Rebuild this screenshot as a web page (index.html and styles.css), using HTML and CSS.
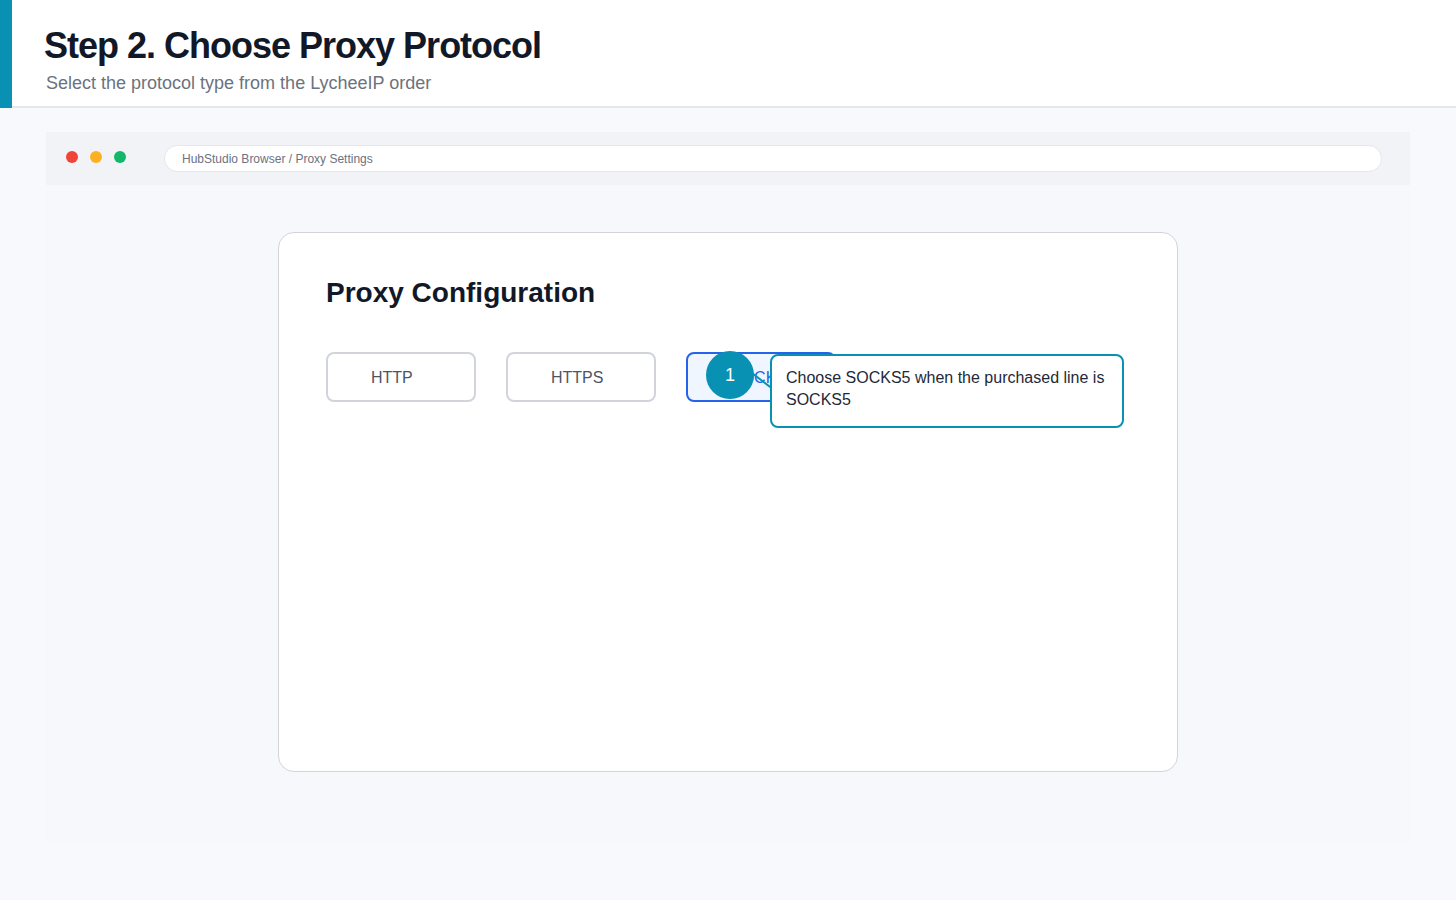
FILE: index.html
```html
<!DOCTYPE html>
<html lang="en">
<head>
    <meta charset="UTF-8">
    <meta name="viewport" content="width=device-width, initial-scale=1.0">
    <title>Step 2. Choose Proxy Protocol</title>
    <link rel="stylesheet" href="styles.css">
</head>
<body>
    <header class="step-header">
        <div class="step-inner">
            <h1>Step 2. Choose Proxy Protocol</h1>
            <p class="step-sub">Select the protocol type from the LycheeIP order</p>
        </div>
    </header>

    <div class="browser">
        <div class="browser-bar">
            <div class="lights">
                <span class="light red"></span>
                <span class="light amber"></span>
                <span class="light green"></span>
            </div>
            <div class="address">HubStudio Browser / Proxy Settings</div>
        </div>

        <div class="browser-body">
            <div class="card">
                <h2>Proxy Configuration</h2>
                <div class="protocols">
                    <button class="proto">HTTP</button>
                    <button class="proto">HTTPS</button>
                    <div class="proto-wrap">
                        <button class="proto active">SOCKS5</button>
                        <svg class="connector" width="40" height="30" viewBox="0 0 40 30">
                            <line x1="2" y1="2" x2="36" y2="28" stroke="#0891b2" stroke-width="2"/>
                        </svg>
                        <span class="badge">1</span>
                        <div class="tip">Choose SOCKS5 when the purchased line is SOCKS5</div>
                    </div>
                </div>
            </div>
        </div>
    </div>
</body>
</html>
```

FILE: styles.css
```css
body {
    font-family: "Liberation Sans", Arial, sans-serif;
    background-color: #f8f9fc;
    margin: 0;
    padding: 0;
}

.step-header {
    background-color: #fff;
    border-left: 12px solid #0891b2;
}

.step-inner {
    border-bottom: 2px solid #e5e7eb;
    padding: 24px 32px 10px;
}

.step-header h1 {
    margin: 0;
    font-size: 36px;
    line-height: 1.2;
    letter-spacing: -1px;
    color: #111827;
}

.step-sub {
    margin: 4px 0 0 2px;
    font-size: 18px;
    line-height: 1.4;
    color: #6b7280;
}

.browser {
    margin: 24px 46px 0;
}

.browser-bar {
    height: 53px;
    background-color: #f1f3f7;
    display: flex;
    align-items: center;
    padding: 0 28px 0 20px;
}

.lights {
    display: flex;
    gap: 12px;
    margin: 0 38px 3px 0;
}

.light {
    width: 12px;
    height: 12px;
    border-radius: 50%;
}

.red { background-color: #f04438; }
.amber { background-color: #fdb022; }
.green { background-color: #12b76a; }

.address {
    flex: 1;
    height: 25px;
    line-height: 26px;
    background-color: #fff;
    border: 1px solid #e5e7eb;
    border-radius: 14px;
    padding: 0 17px;
    font-size: 12px;
    color: #6b7280;
}

.browser-body {
    background-color: #f7f8fb;
    padding: 47px 0 70px;
}

.card {
    width: 900px;
    height: 540px;
    box-sizing: border-box;
    margin: 0 auto;
    background-color: #fff;
    border: 1px solid #d1d5db;
    border-radius: 16px;
    padding: 43px 47px;
}

.card h2 {
    margin: 0;
    font-size: 28px;
    line-height: 1.2;
    color: #111827;
}

.protocols {
    display: flex;
    gap: 30px;
    margin-top: 42px;
}

.proto {
    width: 150px;
    height: 50px;
    background-color: #fff;
    border: 2px solid #d1d5db;
    border-radius: 8px;
    font-family: "Liberation Sans", Arial, sans-serif;
    font-size: 16px;
    color: #4b5563;
    text-align: left;
    padding: 2px 0 0 43px;
}

.proto.active {
    background-color: #eff6ff;
    border-color: #2563eb;
    color: #2563eb;
}

.proto-wrap {
    position: relative;
}

.connector {
    position: absolute;
    left: 60px;
    top: 16px;
}

.badge {
    position: absolute;
    left: 20px;
    top: -1px;
    width: 48px;
    height: 48px;
    border-radius: 50%;
    background-color: #0891b2;
    color: #fff;
    font-size: 18px;
    line-height: 48px;
    text-align: center;
}

.tip {
    position: absolute;
    left: 84px;
    top: 2px;
    width: 322px;
    background-color: #fff;
    border: 2px solid #0891b2;
    border-radius: 8px;
    padding: 11px 14px 15px;
    font-size: 16px;
    line-height: 22px;
    color: #1f2937;
}
```
